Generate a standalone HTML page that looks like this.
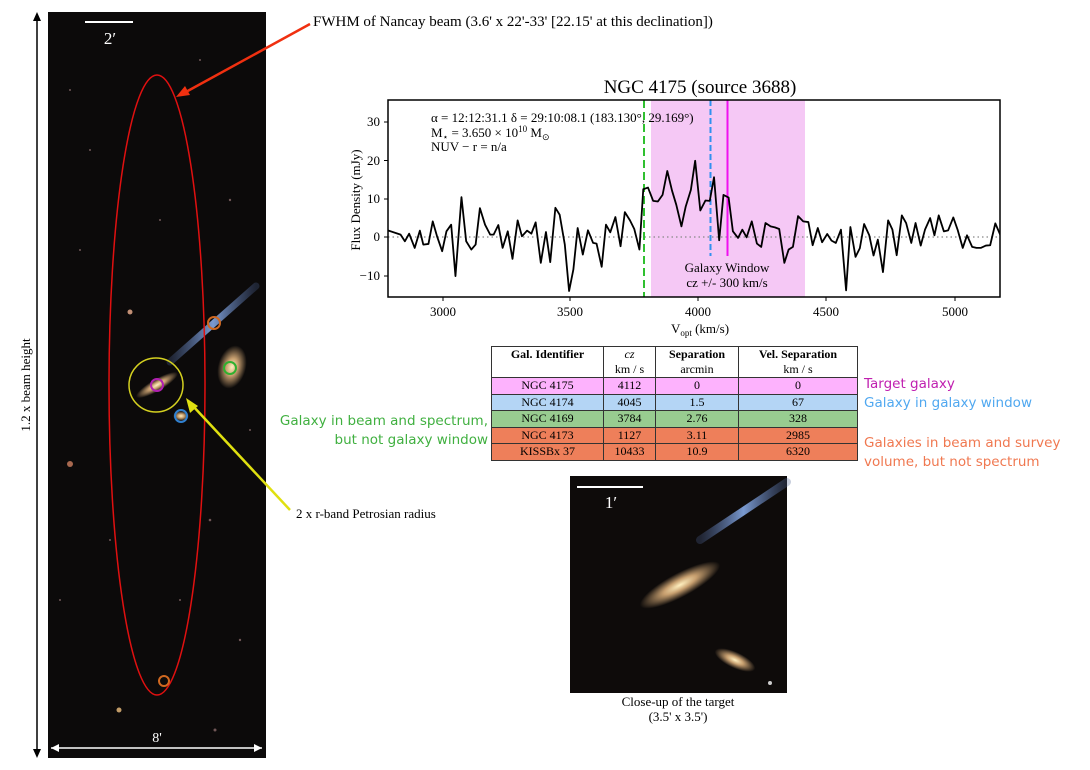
<!DOCTYPE html>
<html><head><meta charset="utf-8"><style>
body{margin:0;width:1090px;height:770px;background:#fff;position:relative;overflow:hidden;font-family:"Liberation Serif",serif;}
.a{position:absolute;white-space:nowrap}
.s{font-family:"DejaVu Sans","Liberation Sans",sans-serif;font-size:13.5px;}
table{position:absolute;left:491px;top:346px;border-collapse:collapse;font-size:12px;font-family:"Liberation Serif",serif;}
td{border:1px solid #333;text-align:center;padding:0;height:15.5px;line-height:15px}
</style></head><body>
<svg width="1090" height="770" style="position:absolute;left:0;top:0" xmlns="http://www.w3.org/2000/svg">
<defs>
<radialGradient id="g1"><stop offset="0" stop-color="#fff0c0"/><stop offset="0.4" stop-color="#c8a070"/><stop offset="1" stop-color="#c8a070" stop-opacity="0"/></radialGradient>
<linearGradient id="bl" x1="0" x2="1"><stop offset="0" stop-color="#4a6090" stop-opacity="0.3"/><stop offset="0.5" stop-color="#7a9ad0"/><stop offset="1" stop-color="#4a6090" stop-opacity="0.3"/></linearGradient>
</defs>
<rect x="48" y="12" width="218" height="746" fill="#0c0a0a"/>
<g fill="#8a6a6a" opacity="0.8">
<circle cx="70" cy="464" r="3" fill="#d08060"/><circle cx="130" cy="312" r="2.5" fill="#f0b090"/><circle cx="119" cy="710" r="2.5" fill="#f0c080"/>
<circle cx="90" cy="150" r="1"/><circle cx="200" cy="60" r="1"/><circle cx="230" cy="200" r="1.2"/><circle cx="60" cy="600" r="1"/><circle cx="240" cy="640" r="1.2"/><circle cx="110" cy="540" r="1"/><circle cx="210" cy="520" r="1.3"/><circle cx="80" cy="250" r="1"/><circle cx="250" cy="430" r="1"/><circle cx="180" cy="600" r="1"/><circle cx="160" cy="220" r="1"/><circle cx="70" cy="90" r="1"/><circle cx="215" cy="730" r="1.5"/>
</g>
<line x1="170" y1="362" x2="256" y2="286" stroke="url(#bl)" stroke-width="7" stroke-linecap="round"/>
<ellipse cx="232" cy="367" rx="14" ry="22" fill="url(#g1)" transform="rotate(15 232 367)"/>
<ellipse cx="157" cy="385" rx="24" ry="6" fill="url(#g1)" transform="rotate(-30 157 385)"/>
<ellipse cx="181" cy="416" rx="8" ry="5" fill="url(#g1)"/>
<ellipse cx="157" cy="385" rx="48" ry="310" fill="none" stroke="#e01010" stroke-width="1.5"/>
<circle cx="156" cy="385" r="27" fill="none" stroke="#d4d020" stroke-width="1.5"/>
<circle cx="157" cy="385" r="6" fill="none" stroke="#b020b0" stroke-width="2"/>
<circle cx="181" cy="416" r="6" fill="none" stroke="#3080d0" stroke-width="2"/>
<circle cx="230" cy="368" r="6" fill="none" stroke="#30b030" stroke-width="2"/>
<circle cx="214" cy="323" r="6" fill="none" stroke="#d06820" stroke-width="2"/>
<circle cx="164" cy="681" r="5" fill="none" stroke="#d06820" stroke-width="2"/>
<line x1="85" y1="22" x2="133" y2="22" stroke="#fff" stroke-width="2"/>
<line x1="51" y1="748" x2="262" y2="748" stroke="#fff" stroke-width="1.5"/>
<path d="M51 748l8-4v8zM262 748l-8-4v8z" fill="#fff"/>
<line x1="37" y1="14" x2="37" y2="756" stroke="#000" stroke-width="1.5"/>
<path d="M37 12l-4 9h8zM37 758l-4-9h8z" fill="#000"/>
<line x1="310" y1="24" x2="184" y2="93" stroke="#f03010" stroke-width="2.5"/>
<path d="M176 97l14-2-5-9z" fill="#f03010"/>
<line x1="290" y1="510" x2="192" y2="405" stroke="#e0e010" stroke-width="2.5"/>
<path d="M186 398l4 15 8-7z" fill="#e0e010"/>
<!-- closeup -->
<rect x="570" y="476" width="217" height="217" fill="#0e0b0a"/>
<line x1="700" y1="540" x2="787" y2="482" stroke="url(#bl)" stroke-width="8" stroke-linecap="round"/>
<ellipse cx="680" cy="585" rx="45" ry="12" fill="url(#g1)" transform="rotate(-28 680 585)"/>
<ellipse cx="735" cy="660" rx="22" ry="8" fill="url(#g1)" transform="rotate(25 735 660)"/>
<circle cx="770" cy="683" r="2" fill="#ccc"/>
<line x1="577" y1="487" x2="643" y2="487" stroke="#fff" stroke-width="2"/>
<!-- plot -->
<rect x="651" y="100" width="154" height="197" fill="#f5c8f5"/>
<line x1="388" y1="237" x2="1000" y2="237" stroke="#888" stroke-width="1.2" stroke-dasharray="1.5 3"/>
<line x1="644" y1="100" x2="644" y2="297" stroke="#30c030" stroke-width="2" stroke-dasharray="8 4"/>
<line x1="710.5" y1="100" x2="710.5" y2="256" stroke="#3090f0" stroke-width="2" stroke-dasharray="6 3"/>
<line x1="727.5" y1="100" x2="727.5" y2="256" stroke="#f010f0" stroke-width="2"/>
<clipPath id="pc"><rect x="388" y="100" width="612" height="197"/></clipPath>
<g clip-path="url(#pc)">
<g transform="translate(338.4,70.6) scale(0.4288,0.3314)">
<polyline fill="none" stroke="#000" stroke-width="1.8" vector-effect="non-scaling-stroke" stroke-linejoin="round" points="110,480 145,495 155,515 165,492 178,535 190,483 198,525 210,523 220,455 230,500 242,545 252,485 263,465 273,620 287,382 298,515 310,540 320,525 330,415 342,465 354,495 362,495 373,466 383,535 395,485 406,568 418,452 428,500 440,483 450,492 460,458 472,580 484,487 494,578 506,414 516,435 528,525 538,665 548,600 558,475 570,555 582,482 594,520 602,522 614,592 624,465 634,488 646,442 658,530 668,427 680,452 690,478 702,540 711,358 722,353 734,393 745,395 756,375 767,303 778,362 788,405 800,470 810,410 822,360 832,272 844,422 856,392 866,393 876,322 888,512 898,375 910,383 920,485 932,505 942,480 952,503 964,455 976,522 986,532 996,460 1008,470 1018,473 1028,478 1040,580 1050,540 1060,532 1072,439 1084,455 1096,457 1106,527 1118,475 1128,518 1140,493 1150,513 1160,520 1172,480 1184,663 1194,472 1206,562 1216,536 1226,463 1238,497 1248,558 1258,510 1270,608 1282,452 1292,480 1302,557 1314,437 1324,460 1336,520 1346,460 1358,528 1368,480 1380,445 1390,497 1400,437 1412,485 1422,482 1434,443 1444,480 1456,535 1466,497 1478,532 1488,535 1498,535 1510,528 1520,527 1532,461 1545,500"/>
</g></g>
<rect x="388" y="100" width="612" height="197" fill="none" stroke="#000" stroke-width="1.5"/>
<g stroke="#000" stroke-width="1">
<line x1="388" y1="122" x2="384" y2="122"/><line x1="388" y1="160.5" x2="384" y2="160.5"/><line x1="388" y1="199" x2="384" y2="199"/><line x1="388" y1="237" x2="384" y2="237"/><line x1="388" y1="276" x2="384" y2="276"/>
<line x1="443" y1="297" x2="443" y2="301"/><line x1="570" y1="297" x2="570" y2="301"/><line x1="698" y1="297" x2="698" y2="301"/><line x1="826" y1="297" x2="826" y2="301"/><line x1="955" y1="297" x2="955" y2="301"/>
</g>
<g font-family="Liberation Serif,serif" font-size="13" fill="#000">
<text x="380" y="126" text-anchor="end">30</text><text x="380" y="165" text-anchor="end">20</text><text x="380" y="203" text-anchor="end">10</text><text x="380" y="241" text-anchor="end">0</text><text x="380" y="280" text-anchor="end">−10</text>
<text x="443" y="316" text-anchor="middle">3000</text><text x="570" y="316" text-anchor="middle">3500</text><text x="698" y="316" text-anchor="middle">4000</text><text x="826" y="316" text-anchor="middle">4500</text><text x="955" y="316" text-anchor="middle">5000</text>
<text x="700" y="333" text-anchor="middle">V<tspan font-size="9" dy="3">opt</tspan><tspan dy="-3"> (km/s)</tspan></text>
<text transform="translate(360,200) rotate(-90)" text-anchor="middle">Flux Density (mJy)</text>
<text x="700" y="93" text-anchor="middle" font-size="19">NGC 4175 (source 3688)</text>
<text x="431" y="122">α = 12:12:31.1 δ = 29:10:08.1 (183.130°, 29.169°)</text>
<text x="431" y="137">M<tspan font-size="9" dy="3">⋆</tspan><tspan dy="-3"> = 3.650 × 10</tspan><tspan font-size="9" dy="-5">10</tspan><tspan dy="5"> M</tspan><tspan font-size="9" dy="3">⊙</tspan></text>
<text x="431" y="151">NUV − r = n/a</text>
<text x="727" y="272" text-anchor="middle">Galaxy Window</text>
<text x="727" y="287" text-anchor="middle">cz +/- 300 km/s</text>
<text x="313" y="26" font-size="15">FWHM of Nancay beam (3.6' x 22'-33' [22.15' at this declination])</text>
<text x="296" y="518" font-size="13">2 x r-band Petrosian radius</text>
<text x="678" y="706" font-size="13" text-anchor="middle">Close-up of the target</text>
<text x="678" y="721" font-size="13" text-anchor="middle">(3.5' x 3.5')</text>
<text x="157" y="742" font-size="14" fill="#fff" text-anchor="middle">8'</text>
<text x="110" y="44" font-size="17" fill="#fff" text-anchor="middle">2′</text>
<text x="611" y="508" font-size="17" fill="#fff" text-anchor="middle">1′</text>
<text transform="translate(30,385) rotate(-90)" text-anchor="middle" font-size="13">1.2 x beam height</text>
</g>
</svg>
<table>
<tr style="height:31px"><td style="width:111px;vertical-align:top"><b>Gal. Identifier</b></td><td style="width:51px"><i>cz</i><br>km / s</td><td style="width:82px"><b>Separation</b><br>arcmin</td><td style="width:118px"><b>Vel. Separation</b><br>km / s</td></tr>
<tr style="background:#fdb2fd"><td>NGC 4175</td><td>4112</td><td>0</td><td>0</td></tr>
<tr style="background:#b4d5f5"><td>NGC 4174</td><td>4045</td><td>1.5</td><td>67</td></tr>
<tr style="background:#98cc90"><td>NGC 4169</td><td>3784</td><td>2.76</td><td>328</td></tr>
<tr style="background:#ee7f5a"><td>NGC 4173</td><td>1127</td><td>3.11</td><td>2985</td></tr>
<tr style="background:#ee7f5a"><td>KISSBx 37</td><td>10433</td><td>10.9</td><td>6320</td></tr>
</table>
<div class="a s" style="left:864px;top:376px;color:#c020b0">Target galaxy</div>
<div class="a s" style="left:864px;top:395px;color:#50a8f0">Galaxy in galaxy window</div>
<div class="a s" style="left:270px;top:412px;width:218px;text-align:right;color:#40b040;line-height:19px">Galaxy in beam and spectrum,<br>but not galaxy window</div>
<div class="a s" style="left:864px;top:434px;color:#f07850;line-height:19px">Galaxies in beam and survey<br>volume, but not spectrum</div>
</body></html>
